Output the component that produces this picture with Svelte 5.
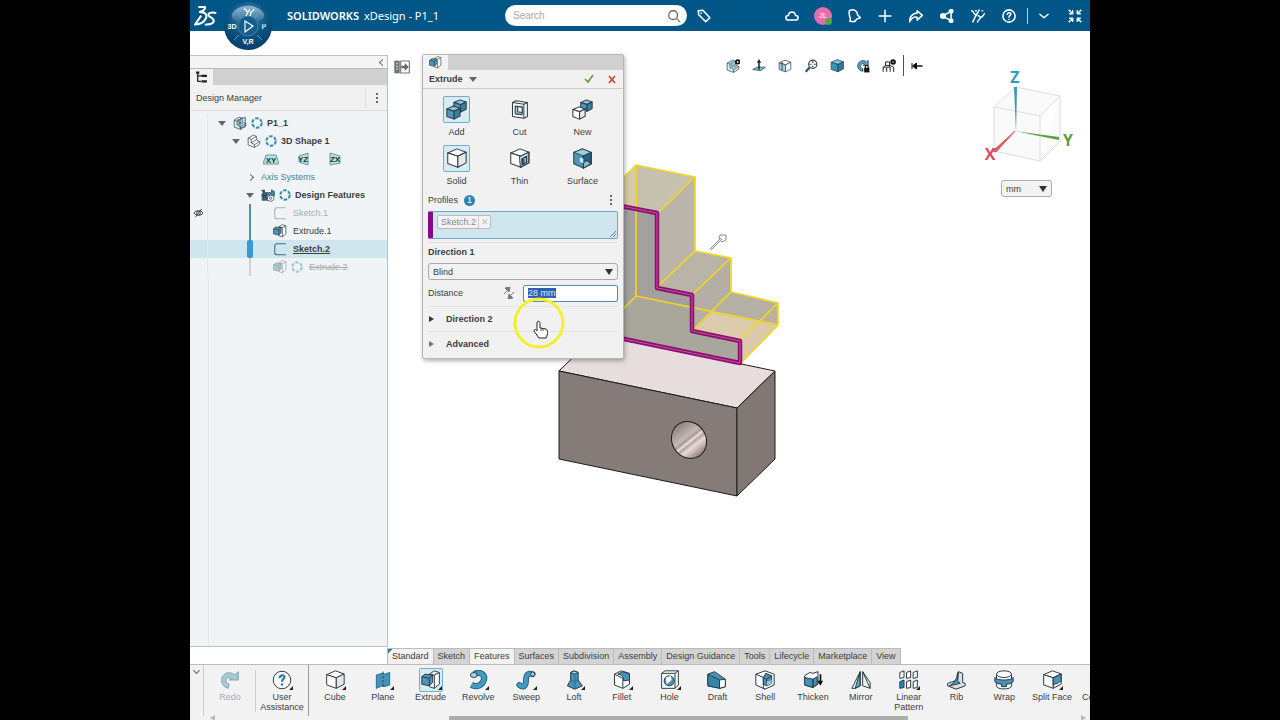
<script>
  import { onMount } from 'svelte';

  let distance = $state('28 mm');
  let endCondition = $state('Blind');
  let units = $state('mm');
  let operation = $state('Add');
  let bodyType = $state('Solid');
  let distanceInput;

  const operations = ['Add', 'Cut', 'New'];
  const bodyTypes = ['Solid', 'Thin', 'Surface'];

  const headerIcons = ['cloud', 'user', 'bell', 'plus', 'forward', 'share', 'people', 'help'];
  const viewIcons = ['display', 'normal', 'views', 'zoom', 'shaded', 'rotate', 'section'];

  const tabs = [
    'Standard', 'Sketch', 'Features', 'Surfaces', 'Subdivision', 'Assembly',
    'Design Guidance', 'Tools', 'Lifecycle', 'Marketplace', 'View'
  ];

  const tools = [
    { name: 'Cube', more: true },
    { name: 'Plane', more: true },
    { name: 'Extrude', more: true, active: true },
    { name: 'Revolve', more: true },
    { name: 'Sweep', more: true },
    { name: 'Loft', more: true },
    { name: 'Fillet', more: true },
    { name: 'Hole', more: true },
    { name: 'Draft' },
    { name: 'Shell' },
    { name: 'Thicken' },
    { name: 'Mirror' },
    { name: 'Linear Pattern', more: true },
    { name: 'Rib' },
    { name: 'Wrap' },
    { name: 'Split Face', more: true },
    { name: 'Combine' }
  ];

  const features = [
    { name: 'Sketch.1', icon: 'sketch', hidden: true },
    { name: 'Extrude.1', icon: 'Extrude' },
    { name: 'Sketch.2', icon: 'sketch', selected: true },
    { name: 'Extrude.2', icon: 'Extrude', ring: true, pending: true }
  ];

  onMount(() => {
    distanceInput.focus();
    distanceInput.select();
  });
</script>

<svelte:head>
  <title>SOLIDWORKS xDesign - P1_1</title>
</svelte:head>

{#snippet cube(x, y, s, top, left, right)}
  <polygon points="{x},{y + s * 0.22} {x + s * 0.5},{y} {x + s},{y + s * 0.18} {x + s * 0.55},{y + s * 0.4}" fill={top} />
  <polygon points="{x},{y + s * 0.22} {x + s * 0.55},{y + s * 0.4} {x + s * 0.55},{y + s} {x},{y + s * 0.8}" fill={left} />
  <polygon points="{x + s * 0.55},{y + s * 0.4} {x + s},{y + s * 0.18} {x + s},{y + s * 0.76} {x + s * 0.55},{y + s}" fill={right} />
{/snippet}

{#snippet icon(name)}
  <svg class="icon" viewBox="0 0 24 24" fill="none" stroke="#2c3e48" stroke-width="1.2" stroke-linejoin="round" aria-hidden="true">
    {#if name === 'Add'}
      {@render cube(9, 1, 14, '#8ec3da', '#4f95b8', '#397fa3')}
      {@render cube(1, 8, 15, '#8ec3da', '#4f95b8', '#397fa3')}
    {:else if name === 'New'}
      {@render cube(10, 1, 13, '#8ec3da', '#4f95b8', '#397fa3')}
      {@render cube(1, 9, 14, '#fff', '#fff', '#ececec')}
    {:else if name === 'Cut'}
      <path d="M4 4l4-2 13 2v16l-4 2-13-2z" fill="#fff" />
      <path d="M4 4l13 2v16M17 6l4-2" />
      <path d="M7 8l8 1v9l-8-1z" fill="#8ec3da" />
      <path d="M10 8.500v6l5 1V9.500z" fill="#fff" />
    {:else if name === 'Solid' || name === 'Cube'}
      {@render cube(2, 1, 21, '#fff', '#fff', '#e8e8e8')}
    {:else if name === 'Thin'}
      {@render cube(2, 1, 21, '#fff', '#fff', '#f2f2f2')}
      <path d="M12 10l10-5v12l-9 5z" fill="#d4e7ee" />
      <path d="M15 12l5-2.500v7l-5 2.500z" fill="#8ec3da" />
      <path d="M15 12v7l2-1v-5z" fill="#2f7599" />
    {:else if name === 'Surface'}
      <path d="M2 5l10-4 10 4v13l-9 5-11-5z" fill="#4f95b8" />
      <path d="M2 5l10-4 10 4-9 4z" fill="#9dcde0" />
      <path d="M13 9l9-4v13l-9 5z" fill="#26617f" />
      <path d="M13 9v14l9-5-5-4-4 3z" fill="#7fc0d8" />
      <path d="M9 11l4 1v5l-4-1z" fill="#d3edf5" stroke="none" />
    {:else if name === 'Extrude'}
      <path d="M10 5l6-4 6 2v14l-6 5-6-2z" fill="#fff" />
      <path d="M16 6l6-3M16 6v16M10 5l6 1" />
      <path d="M1 8l4-3 9 1v9l-4 4-9-2z" fill="#4f95b8" />
      <path d="M1 8l9 2v9M10 10l4-4" />
    {:else if name === 'Plane'}
      <path d="M4 6l7-2 3 1 6-2v15l-7 2-2-1-7 3z" fill="#4594b8" stroke="#2a6f91" />
      <path d="M12 2v20" stroke-dasharray="3 2" />
    {:else if name === 'Revolve'}
      <path d="M8 5c5-4 13 0 11 7-2 7-9 9-15 6" stroke="#1f5470" stroke-width="7.500" />
      <path d="M8 5c5-4 13 0 11 7-2 7-9 9-15 6" stroke="#419abf" stroke-width="5.500" />
      <ellipse cx="7" cy="6" rx="4" ry="3" fill="#a8d8e8" />
    {:else if name === 'Sweep'}
      <path d="M4 18c5 4 8 1 8-5 0-7 2-10 8-8" stroke="#1f5470" stroke-width="7" stroke-linecap="round" />
      <path d="M4 18c5 4 8 1 8-5 0-7 2-10 8-8" stroke="#419abf" stroke-width="5" stroke-linecap="round" />
      <circle cx="20" cy="5" r="2.500" fill="#a8d8e8" />
    {:else if name === 'Loft'}
      <path d="M8 3l4-2 5 2v9l5 7-9 4-9-4 4-7z" fill="#4594b8" />
      <path d="M8 3l5 2 4-2-5-2z" fill="#a8d8e8" /><path d="M13 5v18M8 12l5 2 4-2" stroke="#2a6f91" />
    {:else if name === 'Fillet'}
      <path d="M3 5l8-4 10 3v13l-8 5-10-4z" fill="#fff" />
      <path d="M3 5l10 5v12" />
      <path d="M7 5l6-3 8 3v7l-7 1c0-5-2-7-7-8z" fill="#4594b8" />
    {:else if name === 'Hole'}
      <path d="M2 4l4-3h16v17l-4 4H2z" fill="#fff" />
      <path d="M2 4h16v18M18 4l4-3" />
      <circle cx="11" cy="13" r="6" fill="#4594b8" /><path d="M7 9l6-2 1 5-6 5z" fill="#fff" stroke="none" />
    {:else if name === 'Draft'}
      <path d="M1 5l8-3 13 9v9l-6 2-15-3z" fill="#4594b8" />
      <path d="M1 5l14 7v10l-14-3z" fill="#3585aa" /><path d="M15 12l7-1v9l-7 2z" fill="#fff" />
    {:else if name === 'Shell'}
      <path d="M1 5l11-4 11 4v13l-11 5-11-5z" fill="#fff" />
      <path d="M1 5l9 4v13l2 1" />
      <path d="M10 9l3-5 7 3v9l-6 3-4-2z" fill="#4594b8" /><path d="M10 9l4 2v8M14 11l6-4" />
      <path d="M14 14l6-2v4l-6 3z" fill="#8bd0e8" stroke="none" />
    {:else if name === 'Thicken'}
      <path d="M2 7l6-4 4 1 6-2v15l-6 4-10-3z" fill="#fff" />
      <path d="M2 9l10 2v10l-10-3zM12 11l5-3v9l-5 4z" fill="#4594b8" />
      <path d="M21 5v10" stroke="#111" stroke-width="2" /><path d="M17 13h7l-3 6z" fill="#111" stroke="none" />
    {:else if name === 'Mirror'}
      <path d="M11 2v17l-6 3z" fill="#5cb0c8" /><path d="M1 22L11 2v17l-6 3zM14 2v17l9 3zM14 2l9 13v7" />
    {:else if name === 'Linear Pattern'}
      <g fill="#fff"><path d="M1 3l5-2v8l-5 1zM9 3l5-2v8l-5 1zM17 3l5-2v8l-5 1zM9 14l5-2v9l-5 1zM17 14l5-2v9l-5 1z" /></g>
      <path d="M1 14l5-2v9l-5 1z" fill="#1d8abd" />
    {:else if name === 'Rib'}
      <path d="M15 2l5 2v11l3 1v3l-11 4-10-4v-3l12-4z" fill="#dcdfe1" />
      <path d="M14 3v10l3 3-13 3c5-3 9-7 10-16z" fill="#4594b8" />
    {:else if name === 'Wrap'}
      <path d="M3 5v14c0 5 18 5 18 0V5" fill="#fff" /><ellipse cx="12" cy="5" rx="9" ry="4" fill="#fff" />
      <path d="M1 9c3 4 19 4 22 0v5c-2 2-5 3-8 3v3H9v-3c-4 0-6-1-8-3z" fill="#4594b8" />
    {:else if name === 'Split Face'}
      {@render cube(2, 1, 21, '#fff', '#fff', '#fff')}
      <path d="M13.500 9.500L23 5v9c-3-1-3 4-6 2l-3.500 2z" fill="#4594b8" />
    {:else if name === 'Combine'}
      <circle cx="15" cy="12" r="8" fill="#4594b8" />
    {:else if name === 'Redo'}
      <path d="M22 12V2l-4 4C9-1 0 7 2 14c1 5 4 7 8 8l1-5c-6-2-5-10 3-7l-3 2z" fill="#a5c9d4" stroke="#84a9b4" />
    {:else if name === 'User Assistance'}
      <circle cx="12" cy="12" r="10.500" fill="#fff" />
      <path d="M9 10c0-5 7-4 6-1-1 2-3 2-3 5" stroke="#287ca4" stroke-width="2.600" /><circle cx="12" cy="17.500" r="1.500" fill="#287ca4" stroke="none" />
    {:else if name === 'sketch'}
      <path d="M22 3H7c-3 0-4 2-4 4v11c0 2 1 4 4 4h15" stroke="#3c6d82" stroke-width="1.800" />
    {:else if name === 'part' || name === 'display'}
      <path d="M2 7l9-5 5 2v6l6 3v4l-9 6-11-4z" fill="#dceaf0" />
      <path d="M2 7l5 2v6l6 3v5M7 9l9-5M7 15l9-5M13 18l9-5M9 5v5l8 4" />
      {#if name === 'part'}
        <path d="M12 5l9-3v16l-9 3z" fill="#8cc4dc" fill-opacity=".4" />
      {:else}
        <path d="M3 8l4 2v6l6 3 8-5-5-3V5l-5-2z" fill="#7eb8ce" stroke="none" fill-opacity=".6" />
        <circle cx="20" cy="5" r="3" stroke="#111" stroke-width="3" fill="#fff" />
      {/if}
    {:else if name === 'shape'}
      <path d="M2 7l9-5 5 2v6l6 3v4l-9 6-11-4z" fill="#fff" />
      <path d="M2 7l5 2v6l6 3v5M7 9l9-5M7 15l9-5M13 18l9-5" />
    {:else if name === 'features'}
      <path d="M1 4h5v4h12V3l5 3v7h-6v8H2V9h3z" fill="#3b8fb4" />
      <path d="M9 8v12M1 13h9M5 3v17" stroke-width="2" />
      <path d="M11 15l5-3 6 2v6l-5 3-6-2z" fill="#fff" /><circle cx="16.500" cy="17.500" r="2" />
    {:else if name === 'ring'}
      <circle cx="12" cy="12" r="9.500" stroke="#2c91a8" stroke-width="4" stroke-dasharray="7 2.950" />
    {:else if name === 'tree'}
      <path d="M5 2v17h6M5 9h8" stroke="#222" stroke-width="2.400" />
      <path d="M2 3h6M12 9h10M12 19h10" stroke="#222" stroke-width="4" />
    {:else if name === 'eye'}
      <path d="M2 12c5-7 15-7 20 0-5 7-15 7-20 0z" stroke-width="2" /><circle cx="12" cy="12" r="4" stroke-width="2" /><path d="M5 21L19 3" stroke-width="2" />
    {:else if name === 'normal'}
      <path d="M1 18l8-4h14l-8 6z" fill="#7fc0d5" /><path d="M12 4v14" stroke="#111" stroke-width="2.400" /><path d="M9 6l3-5 3 5z" fill="#111" />
    {:else if name === 'views'}
      {@render cube(2, 2, 20, '#fff', '#a7d3df', '#fff')}
      <path d="M7 5v15" stroke-width="1.600" />
    {:else if name === 'zoom'}
      <path d="M10 14l-7 8" stroke="#2d5e76" stroke-width="4" /><circle cx="15" cy="9" r="7" fill="#fff" stroke-width="2" />
      <path d="M15 4v10M10 9h10" stroke="#333" stroke-width="2" stroke-dasharray="3 4" />
    {:else if name === 'shaded'}
      {@render cube(2, 1, 21, '#7cc5dc', '#3a96b8', '#277b9f')}
    {:else if name === 'rotate'}
      <path d="M21 11V2l-3 3C11-1 1 6 3 14c1 4 5 7 9 7v-4c-6-1-6-9 1-9l2 1-3 2z" fill="#4fa6c0" />
      <rect x="14" y="15" width="9" height="8" fill="#111" stroke="none" /><path d="M16 16v-3c0-3 5-3 5 0v3" stroke="#111" stroke-width="2" />
    {:else if name === 'section'}
      <path d="M2 22v-8l4-3h8l6 3v8M6 11V5h7v9M2 14h12v8M8 15v7" stroke="#222" stroke-width="1.700" />
      <circle cx="19" cy="5" r="3" stroke="#111" stroke-width="3.500" />
    {:else if name === 'pin'}
      <path d="M23 12H10" stroke="#111" stroke-width="3" /><path d="M2 6v12M11 6v12l-8-6z" fill="#111" stroke="#111" stroke-width="2" />
    {:else if name === 'dock'}
      <path d="M1 3h7v18H1z" fill="#777" stroke="#777" /><path d="M3 7h3M3 11h3M3 15h3" stroke="#eee" />
      <path d="M10 3h13v18H10z" stroke="#777" stroke-width="1.700" /><path d="M11 10h5V6l6 6-6 6v-4h-5z" fill="#666" stroke="none" />
    {/if}
  </svg>
{/snippet}

{#snippet headerIcon(name)}
  <svg class="icon" viewBox="0 0 24 24" fill="none" stroke="#fff" stroke-width="2.600" stroke-linecap="round" stroke-linejoin="round" aria-hidden="true">
    {#if name === 'cloud'}
      <path d="M6 19c-6 0-6-8 0-8 1-8 11-8 12 0 6 0 6 8 0 8z" />
    {:else if name === 'bell'}
      <path d="M4 3c7-4 14 0 14 7l5 5-6 2-5 5-7-1c3-5-3-8-1-18zM14 21l3-4" />
    {:else if name === 'plus'}
      <path d="M12 2v20M2 12h20" />
    {:else if name === 'forward'}
      <path d="M14 3l9 8-9 8v-5C8 13 4 16 1 22c0-10 5-14 13-15z" />
    {:else if name === 'share'}
      <path d="M19 4L4 12l15 8z" /><circle cx="19" cy="4" r="3" fill="#fff" /><circle cx="5" cy="12" r="4" fill="#fff" /><circle cx="19" cy="20" r="3" fill="#fff" />
    {:else if name === 'people'}
      <path d="M1 3c5 0 3 7 7 7 3-1 3-4 6-8M9 10L3 22M12 11c3 1 3 4 6 3 2-1 3-4 5-6M17 14l-6 8M19 3h1M8 3h1" />
    {:else if name === 'help'}
      <circle cx="12" cy="12" r="10.500" /><path d="M9 9c1-4 7-3 6 0 0 2-3 2-3 5M12 18v.1" />
    {:else if name === 'down'}
      <path d="M5 9l7 6 7-6" />
    {:else if name === 'collapse'}
      <path d="M2 2l6 6M8 3v5H3M22 2l-6 6M16 3v5h5M2 22l6-6M8 21v-5H3M22 22l-6-6M16 21v-5h5" />
    {:else if name === 'tag'}
      <path d="M2 3l8-1 12 13-7 7L3 10zM7 7v.1" />
    {/if}
  </svg>
{/snippet}

{#snippet choices(items, current, pick)}
  {#each items as item}
    <button class="choice" class:choice--on={current === item} onclick={() => pick(item)}>
      <span class="choice__icon">{@render icon(item)}</span>
      {item}
    </button>
  {/each}
{/snippet}

<div class="stage">
  <div class="app">
    <header class="header">
      <svg class="logo" viewBox="0 0 64 58" fill="none" stroke="#fff" stroke-width="5.500" stroke-linejoin="round" aria-label="3DS">
        <path d="M12 4h19c1 5-6 11-15 14 16 0 22 8 17 18-5 10-17 16-30 17l17-25" />
        <path d="M62 21c-14-4-25 0-21 7 3 5 16 8 14 16-2 7-14 9-25 9" />
      </svg>
      <button class="compass" aria-label="Compass">
        <svg viewBox="0 0 48 48">
          <defs>
            <radialGradient id="disc" cx=".5" cy=".3" r=".7">
              <stop offset="0" stop-color="#3d84ae" /><stop offset=".6" stop-color="#0c5280" /><stop offset="1" stop-color="#043e69" />
            </radialGradient>
            <linearGradient id="glow" x1="0" y1="0" x2="0" y2="1">
              <stop offset="0" stop-color="#8fbad2" /><stop offset="1" stop-color="#2c7099" />
            </linearGradient>
          </defs>
          <circle cx="24" cy="24" r="24" fill="url(#disc)" />
          <path d="M8 12C14 1 34 1 40 12c1 5-4 7-9 8a9 9 0 0 0-14 0C11 19 7 17 8 12z" fill="url(#glow)" />
          <path d="M10 38l5-5M38 38l-5-5M14 12l4 5M34 12l-4 5" stroke="#5e9abd" />
          <circle cx="24" cy="24" r="10" fill="#155d8c" stroke="#3e83ab" />
          <path d="M21 19l8 5-8 6z" fill="#17608f" stroke="#fff" stroke-width="1.200" />
          <path d="M20 7c3 0 2 3 4 3l2-3M24 10l-2 4M26 10c3 1 3-1 4-3M27 11l-1 3" stroke="#fff" stroke-width="1.300" fill="none" />
          <g fill="#fff" font-family="Liberation Sans, sans-serif" font-size="7" font-weight="700" text-anchor="middle">
            <text x="8" y="27">3D</text><text x="40" y="27">i²</text><text x="24" y="42">V,R</text>
          </g>
        </svg>
      </button>
      <h1 class="title"><b>SOLIDWORKS</b> <span>xDesign - P1_1</span></h1>
      <label class="search">
        <input type="search" placeholder="Search" aria-label="Search" />
        <svg viewBox="0 0 16 16" fill="none" stroke="#666" stroke-width="1.500"><circle cx="7" cy="7" r="5" /><path d="M11 11l4 4" /></svg>
      </label>
      <button class="header__btn header__btn--tag" aria-label="Tags">{@render headerIcon('tag')}</button>
      <nav class="header__actions">
        {#each headerIcons as name}
          {#if name === 'user'}
            <button class="avatar" aria-label="Account">JL<i></i></button>
          {:else}
            <button class="header__btn" aria-label={name}>{@render headerIcon(name)}</button>
          {/if}
        {/each}
        <span class="header__sep"></span>
        <button class="header__btn" aria-label="More">{@render headerIcon('down')}</button>
        <button class="header__btn" aria-label="Exit full screen">{@render headerIcon('collapse')}</button>
      </nav>
    </header>

    <div class="work">
      <aside class="manager">
        <div class="manager__strip"><button aria-label="Collapse panel"><i class="angle angle--left"></i></button></div>
        <div class="tabbar"><span class="tabbar__tab">{@render icon('tree')}</span></div>
        <div class="manager__head">
          <h2>Design Manager</h2>
          <button class="dots" aria-label="Options"><i></i><i></i><i></i></button>
        </div>
        <div class="tree">
          <div class="row">
            <span class="row__eye"></span>
            <div class="row__body">
              <span class="row__arrow"><i class="caret"></i></span>{@render icon('part')}<span class="ring">{@render icon('ring')}</span><b>P1_1</b>
            </div>
          </div>
          <div class="row">
            <span class="row__eye"></span>
            <div class="row__body row__body--1">
              <span class="row__arrow"><i class="caret"></i></span>{@render icon('shape')}<span class="ring">{@render icon('ring')}</span><b>3D Shape 1</b>
            </div>
          </div>
          <div class="row">
            <span class="row__eye"></span>
            <div class="row__body row__body--planes">
              <svg viewBox="0 0 16 14"><path d="M3 3h10l3 9H0z" /><text x="8" y="11">XY</text></svg>
              <svg viewBox="0 0 16 14"><path d="M4 4l9-3v12l-9-3z" /><text x="8" y="10">YZ</text></svg>
              <svg viewBox="0 0 16 14"><path d="M3 1l10 3v7l-10 2z" /><text x="8" y="10">ZX</text></svg>
            </div>
          </div>
          <div class="row">
            <span class="row__eye"></span>
            <div class="row__body row__body--2">
              <span class="row__arrow"><i class="angle"></i></span><a href="#axis">Axis Systems</a>
            </div>
          </div>
          <div class="row">
            <span class="row__eye"></span>
            <div class="row__body row__body--2">
              <span class="row__arrow"><i class="caret"></i></span>{@render icon('features')}<span class="ring">{@render icon('ring')}</span><b>Design Features</b>
            </div>
          </div>
          {#each features as feature}
            <div class="row" class:row--selected={feature.selected} class:row--dim={feature.hidden || feature.pending}>
              <span class="row__eye">{#if feature.hidden}{@render icon('eye')}{/if}</span>
              <div class="row__body row__body--2">
                <span class="rail" class:rail--knob={feature.selected} class:rail--off={feature.pending}></span>
                {@render icon(feature.icon)}
                {#if feature.ring}<span class="ring">{@render icon('ring')}</span>{/if}
                <span class="row__name" class:row__name--struck={feature.pending}>{feature.name}</span>
              </div>
            </div>
          {/each}
        </div>
      </aside>

      <main class="canvas">
        <svg class="scene" viewBox="388 31 702 617" preserveAspectRatio="xMidYMid slice" role="img" aria-label="Model">
          <defs>
            <linearGradient id="bore" x1=".45" y1="0" x2=".55" y2="1">
              <stop offset="0" stop-color="#8f8383" /><stop offset=".4" stop-color="#c4b7b5" /><stop offset=".48" stop-color="#a79997" />
              <stop offset=".54" stop-color="#f0e4df" /><stop offset=".6" stop-color="#b3a5a2" /><stop offset=".7" stop-color="#eadbd7" /><stop offset="1" stop-color="#8d7f7d" />
            </linearGradient>
          </defs>
          <g stroke="#1c1a1a" stroke-linejoin="round">
            <polygon points="559,371 597,334 775,371 737,408" fill="#e8dddd" />
            <polygon points="559,371 737,408 737,496 559,459" fill="#857b79" />
            <polygon points="737,408 775,371 775,459 737,496" fill="#817774" />
            <ellipse cx="689" cy="440" rx="17" ry="19" transform="rotate(-32 689 440)" fill="url(#bore)" />
          </g>
          <g>
            <polygon points="600,201 636,165 636,296 600,332" fill="#d6c9a4" />
            <polygon points="636,165 695,177 658,213 636,209" fill="#c6c1ae" />
            <polygon points="658,213 695,177 695,251 657,287" fill="#bbb4ab" />
            <polygon points="600,203 658,213 657,287 692,295 692,331 636,296 600,332" fill="#a3a09e" />
            <polygon points="636,296 692,308 692,331 740,340 740,364 600,334 600,332" fill="#a9a69c" />
            <polygon points="657,287 695,251 731,258 692,295" fill="#b9b4a6" />
            <polygon points="692,295 731,258 731,292 692,331" fill="#b5aea6" />
            <polygon points="692,331 731,292 778,303 740,340" fill="#b5b0a4" />
            <polygon points="740,340 778,303 778,325 740,364" fill="#dcc9ab" />
            <polygon points="767,314 778,303 778,325 760,321" fill="#bab29f" />
            <polygon points="692,331 712,312 760,322 740,340" fill="#dccbad" />
          </g>
          <g fill="none" stroke="#f2d622" stroke-width="1.700" stroke-linejoin="round">
            <path d="M600 201L636 165L695 177V251L731 258V292L778 303V325L740 364" />
            <path d="M636 165V296L600 332M636 296L778 325M658 213L695 177M657 287L695 251M692 295L731 258M692 331L731 292M740 340L778 303" />
          </g>
          <g fill="none" stroke-linejoin="round">
            <path d="M600 202L657 213V288L692 295V331L740 341V363L600 334" stroke="#8e0f72" stroke-width="4.500" />
            <path d="M600 202L657 213V288L692 295V331L740 341V363L600 334" stroke="#c2509c" />
          </g>
          <path d="M710 249l11-11M711 250l11-11M720 235h6v5l-4 2-3-3z" fill="#fff" stroke="#888" />
        </svg>

        <button class="dock" aria-label="Dock panel">{@render icon('dock')}</button>

        <div class="viewbar">
          {#each viewIcons as name}
            <button class="viewbar__btn" aria-label={name}>{@render icon(name)}</button>
          {/each}
          <span class="viewbar__sep"></span>
          <button class="viewbar__btn" aria-label="Pin">{@render icon('pin')}</button>
        </div>

        <div class="orient">
          <svg viewBox="0 0 92 98" fill="none" aria-label="Axes">
            <path d="M10 37l22-20 44 9-20 20zM10 37v44l46 10V46M56 91l20-20V26" fill="#f5f5f5" fill-opacity=".5" stroke="#dcdcdc" />
            <path d="M32 17v44l44 10M32 61L10 81" stroke="#ececec" />
            <path d="M30 17h3l-1 44z" fill="#3697be" /><path d="M31 61l44 9v-3z" fill="#5b9e48" /><path d="M31 61L9 81l3 1z" fill="#de5960" stroke="#de5960" />
            <g font-family="Open Sans, sans-serif" font-size="16" font-weight="700" text-anchor="middle">
              <text x="31" y="13" fill="#3697be">Z</text><text x="84" y="76" fill="#5b9e48">Y</text><text x="6" y="90" fill="#de4968">X</text>
            </g>
          </svg>
          <span class="pick pick--units">
            <select aria-label="Units" bind:value={units}><option>mm</option><option>cm</option><option>in</option></select>
          </span>
        </div>

        <section class="panel">
          <div class="tabbar tabbar--panel"><span class="tabbar__tab">{@render icon('Extrude')}</span></div>
          <div class="panel__title">
            <button class="panel__name">Extrude <i class="caret"></i></button>
            <button class="panel__ok" aria-label="OK"><svg viewBox="0 0 10 10" fill="none" stroke="#5a9a3c" stroke-width="1.500"><path d="M1 5l3 3 5-7" /></svg></button>
            <button class="panel__ok" aria-label="Cancel"><svg viewBox="0 0 10 10" fill="none" stroke="#cf4433" stroke-width="1.700"><path d="M2 2l6 7M8 2L2 9" /></svg></button>
          </div>
          <div class="choices">
            {@render choices(operations, operation, (v) => (operation = v))}
            {@render choices(bodyTypes, bodyType, (v) => (bodyType = v))}
          </div>
          <div class="panel__form">
            <div class="profiles">
              <span>Profiles</span><span class="badge">1</span>
              <button class="dots" aria-label="Profile options"><i></i><i></i><i></i></button>
            </div>
            <div class="picks">
              <span class="chip">Sketch.2<button aria-label="Remove">✕</button></span>
              <svg class="picks__grip" viewBox="0 0 6 6" stroke="#6b7c84"><path d="M0 6l6-6M3 6l3-3" /></svg>
            </div>
            <h3>Direction 1</h3>
            <span class="pick">
              <select aria-label="Direction 1" bind:value={endCondition}><option>Blind</option><option>Through All</option></select>
            </span>
            <div class="distance">
              <label for="distance">Distance</label>
              <button class="flip" aria-label="Flip direction"><svg viewBox="0 0 12 12" fill="#777" stroke="#777"><path d="M1 7l4-4M2 1l5-1-1 5zM11 5L7 9M10 11l-5 1 1-5z" /></svg></button>
              <input id="distance" bind:this={distanceInput} bind:value={distance} />
            </div>
            <button class="fold"><i class="wedge"></i>Direction 2</button>
            <button class="fold"><i class="wedge wedge--soft"></i>Advanced</button>
          </div>
        </section>

        <svg class="pointer" viewBox="0 0 52 52" aria-hidden="true">
          <circle cx="26" cy="26" r="24" fill="none" stroke="#f2f02c" stroke-width="3" />
          <path d="M24 25c2-2 3 0 3 2v4l6 1c2 1 2 5 0 9h-7l-5-7c0-2 2-2 3 0z" fill="#fff" stroke="#222" />
          <path d="M28 31v3M30 31v3" stroke="#555" />
        </svg>
      </main>
    </div>

    <footer class="ribbon">
      <nav class="tabs">
        {#each tabs as tab, i}
          <button class="tab" class:tab--on={tab === 'Features' || i === 0} class:tab--mark={i === 0}>{tab}</button>
        {/each}
      </nav>
      <div class="tools">
        <button class="tools__toggle" aria-label="Collapse toolbar"><i class="angle angle--down"></i></button>
        <button class="tool tool--off" disabled><span class="tool__icon">{@render icon('Redo')}</span>Redo</button>
        <button class="tool tool--help"><span class="tool__icon tool__icon--more">{@render icon('User Assistance')}</span>User Assistance</button>
        <div class="tools__list">
          {#each tools as tool}
            <button class="tool">
              <span class="tool__icon" class:tool__icon--more={tool.more} class:tool__icon--on={tool.active}>{@render icon(tool.name)}</span>{tool.name}
            </button>
          {/each}
        </div>
      </div>
      <div class="scroll"><i class="wedge wedge--left"></i><span class="scroll__track"><span class="scroll__thumb"></span></span><i class="wedge wedge--light"></i></div>
    </footer>
  </div>
</div>

<style>
  :global(body) { background: #000; }

  .stage {
    display: flex;
    justify-content: center;
    height: 100vh;
    background: #000;
  }
  .app {
    width: min(100%, 125vh);
    display: flex;
    flex-direction: column;
    overflow: hidden;
    background: #fff;
    color: #3d3d3d;
    font: 9px/12px 'Liberation Sans', Arial, sans-serif;
  }
  .app * { box-sizing: border-box; }
  button, input, select {
    font: inherit;
    color: inherit;
    margin: 0;
    padding: 0;
    border: 0;
    background: none;
  }
  h1, h2, h3 { margin: 0; font-size: inherit; }
  svg { display: block; }
  .icon { width: 100%; height: 100%; flex: none; }

  .header {
    position: relative;
    z-index: 2;
    display: flex;
    align-items: center;
    height: 31px;
    flex: none;
    padding: 0 8px 0 4px;
    background: #005686;
    color: #fff;
  }
  .logo { width: 23px; height: 22px; }
  .compass {
    position: absolute;
    left: 34px;
    top: 1px;
    width: 48px;
    height: 50px;
  }
  .title {
    flex: 1;
    padding-left: 70px;
    font: 11px/16px 'Noto Sans', sans-serif;
    white-space: nowrap;
  }
  .title b { font-weight: 600; }
  .title span { margin-left: 2px; }
  .search {
    display: flex;
    align-items: center;
    width: 182px;
    height: 21px;
    padding: 0 6px 0 8px;
    border-radius: 11px;
    background: #fff;
  }
  .search input { flex: 1; min-width: 0; outline: 0; font-size: 10px; color: #333; }
  .search input::placeholder { color: #a8a8a8; }
  .search svg { width: 14px; height: 14px; }
  .header__btn { width: 14px; height: 14px; flex: none; }
  .header__btn--tag { margin-left: 10px; }
  .header__actions {
    display: flex;
    align-items: center;
    gap: 17px;
    margin-left: 74px;
  }
  .header__sep { width: 1px; height: 16px; margin: 0 -8px 0 -6px; background: #b6d3e2; }
  .avatar {
    position: relative;
    width: 18px;
    height: 18px;
    margin: 0 -2px;
    border-radius: 50%;
    background: #e86baa;
    font-size: 8px;
  }
  .avatar i {
    position: absolute;
    right: 0;
    bottom: 0;
    width: 7px;
    height: 7px;
    border-radius: 50%;
    background: #52a548;
  }

  .work { flex: 1; min-height: 0; display: flex; }

  .manager {
    width: 198px;
    flex: none;
    display: flex;
    flex-direction: column;
    margin: 24px 0 1px;
    border: 1px solid #b9bfc2;
    border-left: 0;
    background: #f0f4f6;
  }
  .manager__strip {
    display: flex;
    justify-content: flex-end;
    align-items: center;
    height: 12px;
    padding-right: 2px;
    background: #f4f4f4;
  }
  .manager__strip button { display: flex; }
  .tabbar {
    height: 17px;
    flex: none;
    background: #d0d0d0;
    border-top: 1px solid #b8b8b8;
  }
  .tabbar__tab {
    display: block;
    width: 23px;
    height: 17px;
    padding: 2px 5px;
    background: #f2f2f2;
  }
  .manager__head {
    display: flex;
    align-items: center;
    height: 26px;
    padding-left: 6px;
    background: #f1f1f1;
    border-bottom: 1px solid #ddd;
  }
  .manager__head h2 { flex: 1; font-weight: 400; }
  .dots {
    display: flex;
    flex-direction: column;
    align-items: center;
    justify-content: center;
    gap: 2px;
    width: 14px;
    height: 16px;
  }
  .manager__head .dots { width: 22px; height: 20px; border-left: 1px solid #ddd; }
  .dots i { width: 2px; height: 2px; background: #666; }

  .tree { flex: 1; display: flex; flex-direction: column; padding-top: 3px; }
  .tree::after { content: ''; flex: 1; width: 18px; border-right: 1px solid #e3e8ea; }
  .row { display: flex; height: 18px; }
  .row__eye { width: 18px; padding: 3px; border-right: 1px solid #e3e8ea; }
  .row__body {
    flex: 1;
    display: flex;
    align-items: center;
    gap: 4px;
    padding-left: 7px;
  }
  .row__body--1 { padding-left: 21px; }
  .row__body--2 { padding-left: 35px; }
  .row__body :global(.icon) { width: 14px; height: 14px; }
  .ring { width: 12px; }
  .ring :global(.icon) { width: 12px; height: 12px; }
  .row__arrow { width: 14px; display: flex; justify-content: center; flex: none; }
  .row__body b, .row--selected .row__name { font-weight: 700; }
  .row__body a { color: #3f84a3; text-decoration: none; }
  .row__body--planes { padding-left: 55px; gap: 16px; }
  .row__body--planes svg { width: 16px; height: 14px; }
  .row__body--planes path { fill: #b9dfe0; stroke: #6d9a9c; }
  .row__body--planes text { font-size: 8px; font-weight: 700; text-anchor: middle; fill: #163c40; }
  .rail { align-self: stretch; width: 2px; margin: 0 18px 0 6px; background: #4a90b8; flex: none; }
  .rail--knob { width: 6px; margin: 0 16px 0 4px; border-radius: 2px; background: #3a97d6; }
  .rail--off { background: #d6d3c4; }
  .row__name { padding-left: 2px; }
  .row--selected { background: #d0e6ee; }
  .row--selected .row__name { padding: 0; margin-left: 2px; text-decoration: underline; }
  .row--dim .row__name { color: #a8acae; }
  .row--dim .row__body :global(.icon) { opacity: 0.45; }
  .row__name--struck { text-decoration: line-through; }

  .caret {
    width: 0;
    height: 0;
    border: 4px solid transparent;
    border-top: 5px solid #666;
    border-bottom: 0;
  }
  .angle {
    width: 5px;
    height: 5px;
    border: solid #5a6b74;
    border-width: 1px 1px 0 0;
    transform: rotate(45deg);
  }
  .angle--left { transform: rotate(225deg); }
  .angle--down { transform: rotate(135deg); }
  .wedge {
    width: 0;
    height: 0;
    border: 3px solid transparent;
    border-left: 5px solid #333;
    border-right: 0;
  }
  .wedge--soft { border-left-color: #777; }
  .wedge--light { border-left-color: #bbb; }
  .wedge--left { transform: rotate(180deg); border-left-color: #bbb; }

  .canvas { position: relative; flex: 1; min-width: 0; }
  .scene { position: absolute; inset: 0; width: 100%; height: 100%; }
  .dock { position: absolute; left: 5px; top: 28px; width: 18px; height: 16px; }
  .viewbar {
    position: absolute;
    right: 167px;
    top: 24px;
    display: flex;
    align-items: center;
    gap: 12px;
    height: 21px;
  }
  .viewbar__btn { width: 14px; height: 14px; }
  .viewbar__sep { width: 1px; height: 21px; margin: 0 -5px; background: #555; }
  .viewbar__sep + .viewbar__btn { width: 12px; height: 12px; }
  .orient {
    position: absolute;
    right: 14px;
    top: 39px;
    width: 92px;
    display: flex;
    flex-direction: column;
    gap: 12px;
  }
  .orient > svg { width: 92px; height: 98px; overflow: visible; }

  .pick {
    position: relative;
    display: block;
    height: 17px;
    border: 1px solid #aaa;
    border-radius: 3px;
    background: #f2f2f2;
  }
  .pick::after {
    content: '';
    position: absolute;
    right: 4px;
    top: 5px;
    border: 4px solid transparent;
    border-top: 6px solid #333;
    border-bottom: 0;
    pointer-events: none;
  }
  .pick select {
    appearance: none;
    display: block;
    width: 100%;
    height: 15px;
    padding: 0 4px;
    outline: 0;
  }
  .pick--units { width: 51px; margin-left: 17px; }

  .panel {
    position: absolute;
    left: 34px;
    top: 23px;
    width: 202px;
    padding-bottom: 2px;
    border: 1px solid #b5b5b5;
    border-radius: 2px;
    background: #f1f1f1;
    box-shadow: 1px 2px 4px rgba(0, 0, 0, 0.3);
  }
  .tabbar--panel { height: 15px; border-top: 0; }
  .tabbar--panel .tabbar__tab { width: 25px; height: 15px; padding: 1px 5px; }
  .panel__title {
    display: flex;
    align-items: center;
    height: 19px;
    padding: 0 6px;
    border-bottom: 1px solid #ccc;
  }
  .panel__name { display: flex; align-items: center; gap: 6px; flex: 1; font-weight: 700; }
  .panel__ok { width: 10px; height: 10px; margin-left: 13px; }
  .choices {
    display: grid;
    grid-template-columns: repeat(3, 1fr);
    row-gap: 7px;
    padding: 7px 9px 0 2px;
  }
  .choice { display: flex; flex-direction: column; align-items: center; gap: 3px; }
  .choice__icon {
    width: 27px;
    height: 27px;
    padding: 2px;
    border: 1px solid transparent;
    border-radius: 2px;
  }
  .choice--on .choice__icon { border-color: #73aeca; background: #d6ebf3; }
  .panel__form { padding: 4px 5px 0; }
  .profiles { display: flex; align-items: center; gap: 6px; height: 18px; margin-bottom: 2px; }
  .profiles .dots { margin-left: auto; }
  .badge {
    width: 11px;
    height: 11px;
    border-radius: 50%;
    background: #2f83b3;
    color: #fff;
    line-height: 11px;
    text-align: center;
  }
  .picks {
    position: relative;
    height: 28px;
    padding: 3px 4px;
    border: 1px solid #67aac9;
    border-left: 5px solid #8c0a83;
    border-radius: 2px;
    background: #d0e6ee;
  }
  .chip {
    display: inline-flex;
    align-items: center;
    height: 14px;
    padding-left: 3px;
    border: 1px solid #bbb;
    border-radius: 2px;
    background: #f3f3f3;
    color: #888;
  }
  .chip button { width: 12px; margin-left: 2px; border-left: 1px solid #ccc; color: #bbb; }
  .picks__grip { position: absolute; right: 1px; bottom: 1px; width: 6px; height: 6px; }
  .panel__form h3 { margin: 3px 0 5px; padding-top: 3px; border-top: 1px solid #e0e0e0; }
  .distance { display: flex; align-items: center; height: 26px; }
  .distance label { flex: 1; }
  .flip { width: 12px; height: 12px; margin-right: 8px; }
  .flip svg { width: 12px; height: 12px; }
  .distance input {
    width: 95px;
    height: 17px;
    padding: 0 4px;
    border: 1px solid #4b8fb4;
    border-radius: 2px;
    background: #fff;
    outline: 0;
  }
  .distance input::selection { background: #2f5fb3; color: #dce8ff; }
  .fold {
    display: flex;
    align-items: center;
    gap: 12px;
    width: 100%;
    height: 25px;
    padding-left: 1px;
    border-top: 1px solid #e3e3e3;
    font-weight: 700;
  }
  .pointer { position: absolute; left: 125px; top: 266px; width: 52px; height: 52px; pointer-events: none; }

  .ribbon { flex: none; background: #fff; }
  .tabs { display: flex; padding-left: 197px; }
  .tab {
    height: 16px;
    padding: 0 4px 1px;
    border-top: 1px solid #bbb;
    border-right: 1px solid #bbb;
    background: #d3d3d3;
    white-space: nowrap;
  }
  .tab--on { background: #f2f2f2; }
  .tab--mark {
    border-left: 1px solid #bbb;
    background: linear-gradient(135deg, #2c809f 3px, #f2f2f2 3px);
  }
  .tools {
    display: flex;
    height: 52px;
    border-top: 1px solid #bbb;
    background: #f2f2f2;
  }
  .tools__toggle {
    display: flex;
    justify-content: center;
    width: 14px;
    padding-top: 3px;
    flex: none;
    border-right: 1px solid #ccc;
  }
  .tools__list {
    flex: 1;
    min-width: 0;
    display: grid;
    grid-auto-flow: column;
    grid-auto-columns: calc(100% / 16);
    overflow: hidden;
    padding: 0 14px 0 2px;
  }
  .tool {
    display: flex;
    flex-direction: column;
    align-items: center;
    min-width: 0;
    padding-top: 3px;
    line-height: 10px;
  }
  .tool--off { width: 52px; flex: none; color: #aaa; background: linear-gradient(#ccc, #ccc) right 5px / 1px 42px no-repeat; }
  .tool--help { width: 53px; flex: none; border-right: 1px solid #999; }
  .tool__icon {
    position: relative;
    width: 24px;
    height: 24px;
    flex: none;
    padding: 1px;
    border: 1px solid transparent;
  }
  .tool__icon--on { border-color: #73aeca; border-radius: 2px; background: #d6ebf3; }
  .tool__icon--more::after {
    content: '';
    position: absolute;
    right: 0;
    bottom: 1px;
    border: 2px solid;
    border-color: transparent #222 #222 transparent;
  }
  .scroll { display: flex; align-items: center; height: 4px; padding: 0 4px 0 20px; background: #f2f2f2; }
  .scroll__track { flex: 1; }
  .scroll__thumb { display: block; width: 53%; height: 4px; margin-left: 27%; background: #adadad; }
</style>
